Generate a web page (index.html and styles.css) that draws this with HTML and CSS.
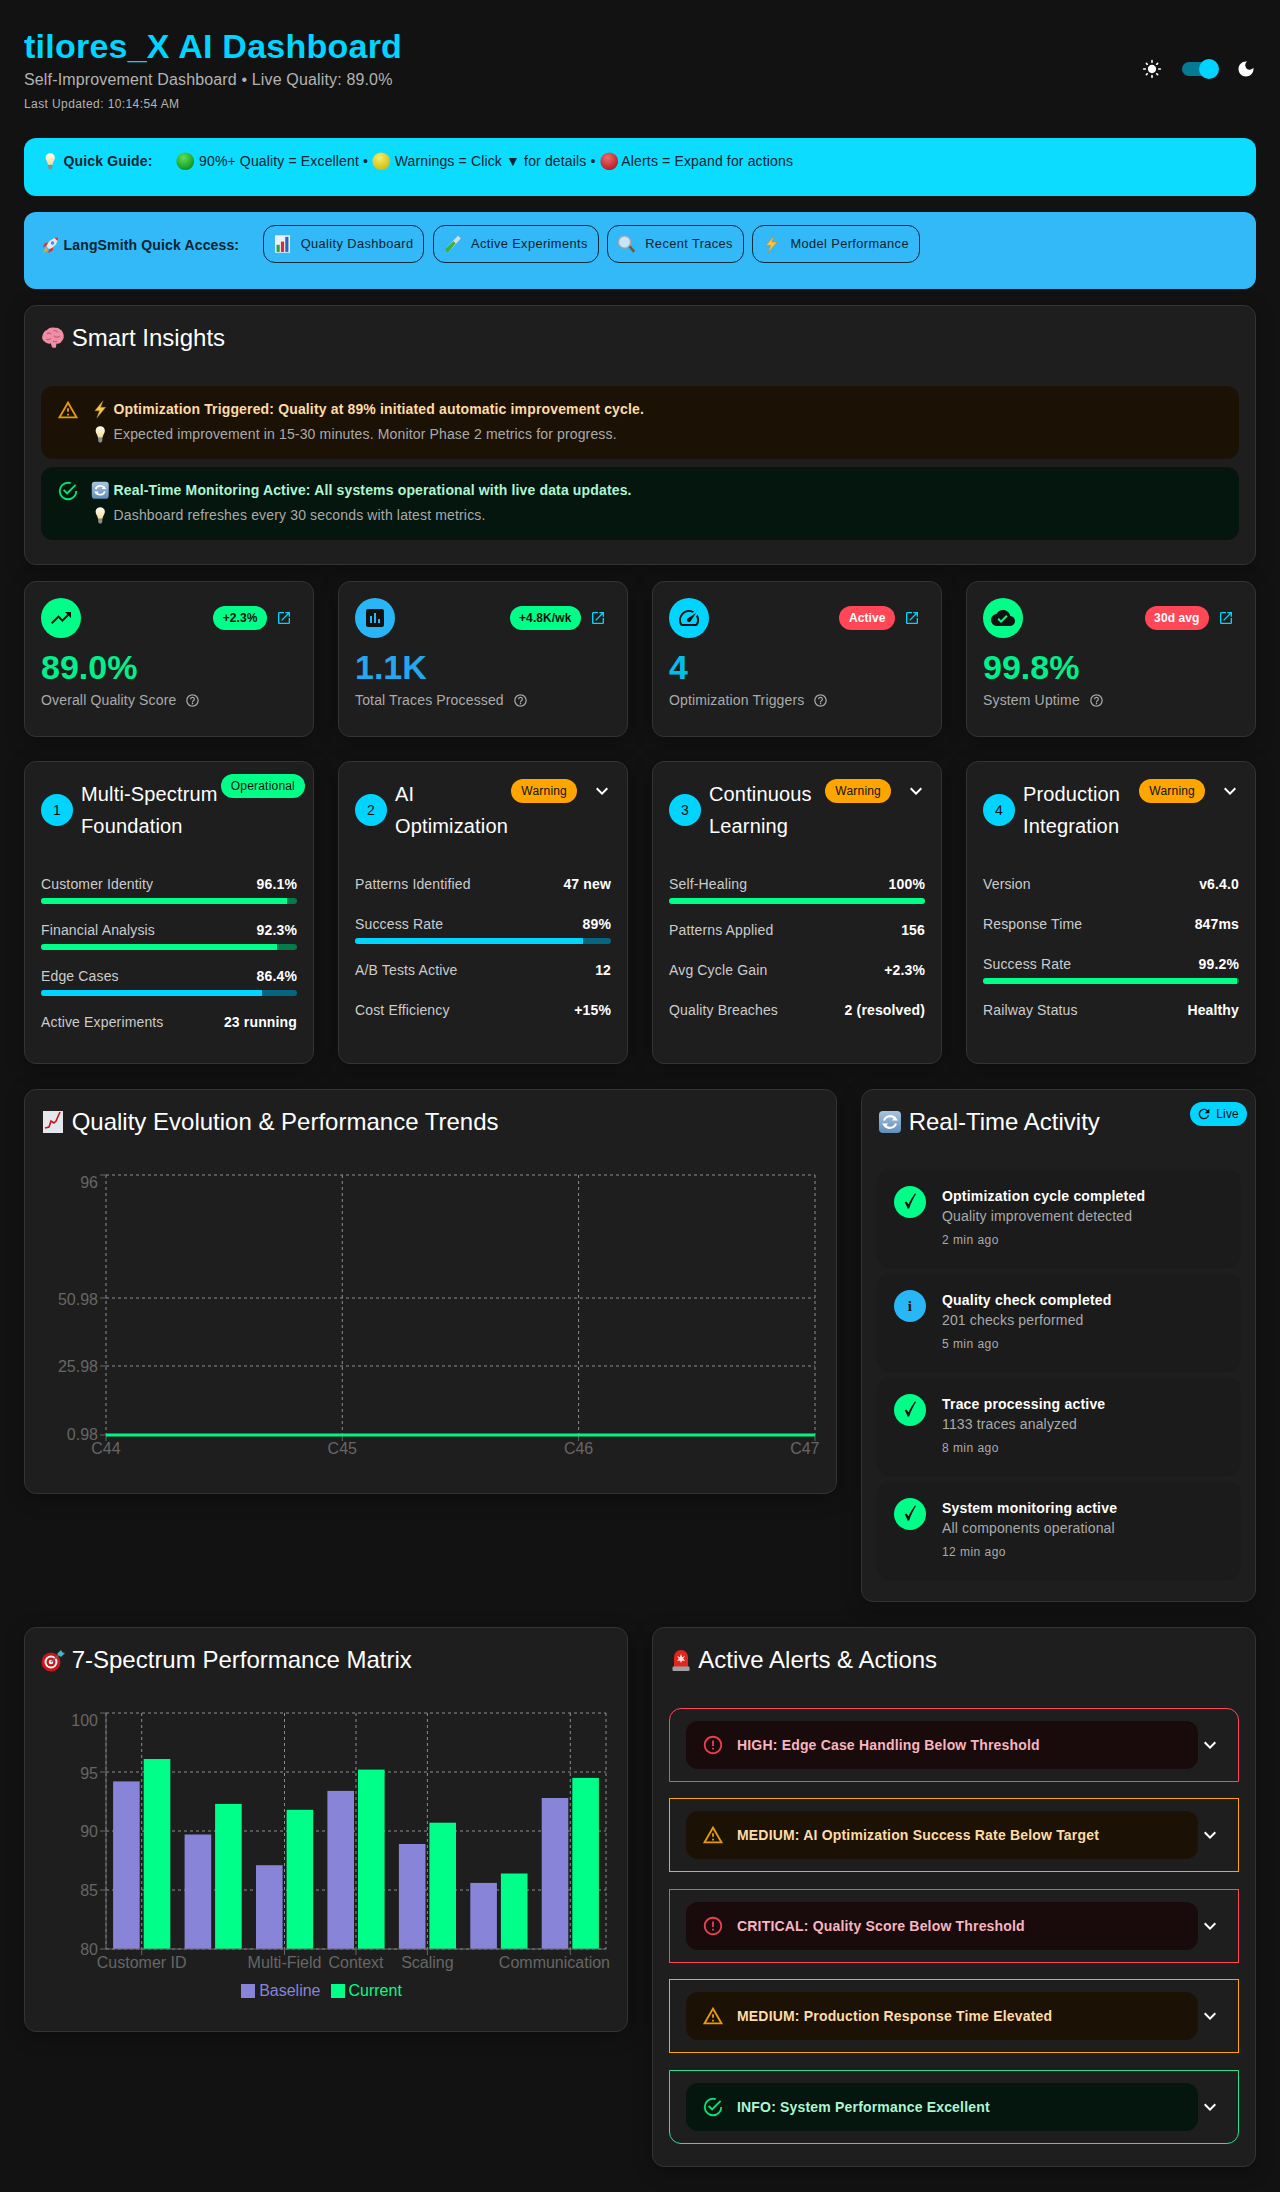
FILE: index.html
```html
<!DOCTYPE html>
<html lang="en">
<head>
    <meta charset="UTF-8">
    <meta name="viewport" content="width=device-width, initial-scale=1.0">
    <title>tilores_X AI Dashboard</title>
    <link rel="stylesheet" href="styles.css">
</head>
<body>
<svg class="sprite" aria-hidden="true">
    <defs>
        <radialGradient id="gGreen" cx="40%" cy="30%" r="75%"><stop offset="0" stop-color="#5fe05a"/><stop offset="1" stop-color="#0a8f1c"/></radialGradient>
        <radialGradient id="gYellow" cx="40%" cy="30%" r="75%"><stop offset="0" stop-color="#f7ee6a"/><stop offset="1" stop-color="#cdb90c"/></radialGradient>
        <radialGradient id="gRed" cx="40%" cy="30%" r="75%"><stop offset="0" stop-color="#ee6a6a"/><stop offset="1" stop-color="#b01a22"/></radialGradient>
        <linearGradient id="gBulb" x1="0" y1="0" x2="0" y2="1"><stop offset="0" stop-color="#fffef0"/><stop offset="1" stop-color="#f3dc9a"/></linearGradient>
        <linearGradient id="gRefresh" x1="0" y1="0" x2="0" y2="1"><stop offset="0" stop-color="#a9c4de"/><stop offset="1" stop-color="#5f8fbb"/></linearGradient>
    </defs>
    <symbol id="e-bulb" viewBox="0 0 24 24">
        <path d="M12 1.500c-3.600 0-6 2.700-6 6 0 3.300 2.600 5 3.100 9h5.800c.5-4 3.100-5.700 3.100-9 0-3.300-2.400-6-6-6z" fill="url(#gBulb)"/>
        <path d="M9.300 17h5.400v3.600l-1.500 2h-2.400l-1.500-2z" fill="#8d8d8a"/>
    </symbol>
    <symbol id="e-green" viewBox="0 0 24 24"><circle cx="12" cy="12" r="11.500" fill="url(#gGreen)"/></symbol>
    <symbol id="e-yellow" viewBox="0 0 24 24"><circle cx="12" cy="12" r="11.500" fill="url(#gYellow)"/></symbol>
    <symbol id="e-red" viewBox="0 0 24 24"><circle cx="12" cy="12" r="11.500" fill="url(#gRed)"/></symbol>
    <symbol id="e-rocket" viewBox="0 0 24 24">
        <path d="M7 13l-5 2 3-6 5-1zM11 17l-2 5 6-3 1-5z" fill="#d8392b"/>
        <path d="M7 13.500C9 7 14.500 2.500 22.500 1.500 21.500 9.500 17 15 10.500 17z" fill="#e6e8ee"/>
        <path d="M22.500 1.500c-.2 1.800-.6 3.400-1.200 4.900l-3.700-3.700c1.500-.6 3.100-1 4.900-1.200z" fill="#d8392b"/>
        <circle cx="15" cy="9" r="2.200" fill="#3f8fd8"/>
        <path d="M6 14.500l3.500 3.500-6.500 4z" fill="#f5a623"/>
    </symbol>
    <symbol id="e-bars" viewBox="0 0 24 24">
        <rect x="2.500" y="1" width="19" height="22" fill="#eef1f4"/>
        <rect x="4.500" y="13" width="4" height="9" fill="#2f9e44"/>
        <rect x="10" y="9" width="4" height="13" fill="#d0312d"/>
        <rect x="15.500" y="3" width="4" height="19" fill="#2b63c4"/>
    </symbol>
    <symbol id="e-tube" viewBox="0 0 24 24">
        <path d="M19 1.500l3.500 3.500L7.500 21.500a2.500 2.500 0 0 1-4-4z" fill="#d6dde0"/>
        <path d="M13 8.500l3 2.500-8.500 10.500a2.500 2.500 0 0 1-4-4z" fill="#3fae49"/>
    </symbol>
    <symbol id="e-lens" viewBox="0 0 24 24">
        <path d="M14 15l2-2 7 7.500-2.500 2.500z" fill="#6d5a3c"/>
        <circle cx="9.500" cy="9.500" r="8.500" fill="#a8a9ad"/>
        <circle cx="9.500" cy="9.500" r="6.800" fill="#c9e6f7"/>
    </symbol>
    <symbol id="e-bolt" viewBox="0 0 24 24">
        <path d="M15.500 1L5 14h6l-3.500 9.500L19 9.500h-6.500z" fill="#f3c64a" stroke="#b3812a" stroke-width=".6"/>
    </symbol>
    <symbol id="e-brain" viewBox="0 0 24 24">
        <path d="M6 4c2-2.500 5-3 7.500-2.200C17 1.500 21 3.500 22 7c1.500 3 .8 6.500-1.500 8.500-1 2-3.500 2.500-5 2-.5 2.500-.5 3.800-.5 4-1.500.5-3 .5-4-.5-.5-1-.8-2-1-3.500-2.500.5-5-.3-6.500-2C1 14 .8 11.500 1.500 9.500 2 7 3.800 4.800 6 4z" fill="#ee8fa6"/>
        <path d="M6 8c1.500-1.500 3-1 4 0M12 5c2-1 4 0 5 1.500M5 13c2 1 4 .5 5-1M13 10c1.500 1.500 4 1.500 6 0M12 15c1 1 3 1 4 0" fill="none" stroke="#c95f7c" stroke-width="1.200"/>
    </symbol>
    <symbol id="e-refresh" viewBox="0 0 24 24">
        <rect x="1" y="1" width="22" height="22" rx="4" fill="url(#gRefresh)"/>
        <path d="M6 10.500A6.500 6.500 0 0 1 17.500 9M18 13.500A6.500 6.500 0 0 1 6.500 15" fill="none" stroke="#fff" stroke-width="2.200"/>
        <path d="M20 10.500h-6l3-4zM4 13.500h6l-3 4z" fill="#fff"/>
    </symbol>
    <symbol id="e-trend" viewBox="0 0 24 24">
        <rect x="2" y="1" width="20" height="22" fill="#e4e8ec"/>
        <path d="M4 18l4-1 2-6 3 2 2-2 4-9" fill="none" stroke="#c9161c" stroke-width="1.600"/>
    </symbol>
    <symbol id="e-target" viewBox="0 0 24 24">
        <circle cx="10" cy="14" r="9.500" fill="#c8161c"/>
        <circle cx="10" cy="14" r="6.500" fill="#f2f2f2"/>
        <circle cx="10" cy="14" r="4.500" fill="#c8161c"/>
        <circle cx="10" cy="14" r="2.300" fill="#f2f2f2"/>
        <path d="M10 14l9-8" stroke="#5a6a70" stroke-width="1.400"/>
        <path d="M16 6l4-4 1.500 2.500L24 5l-4 4z" fill="#45b8c8"/>
    </symbol>
    <symbol id="e-siren" viewBox="0 0 24 24">
        <path d="M5 9a7 7 0 0 1 14 0v10H5z" fill="#e0261f"/>
        <rect x="3.500" y="18.500" width="17" height="4.500" rx="1" fill="#9da1a6"/>
        <path d="M12 6l1.200 3.200L16 8l-1.800 2.800L16 13l-3-.5L12 15l-1-2.500-3 .5 1.800-2.200L8 8l2.800 1.200z" fill="#ffe6e0"/>
    </symbol>

    <symbol id="i-trend" viewBox="0 0 24 24"><path d="M16 6l2.290 2.290-4.880 4.880-4-4L2 16.590 3.410 18l6-6 4 4 6.300-6.290L22 12V6z"/></symbol>
    <symbol id="i-assess" viewBox="0 0 24 24"><path d="M19 3H5c-1.100 0-2 .9-2 2v14c0 1.100.9 2 2 2h14c1.100 0 2-.9 2-2V5c0-1.100-.9-2-2-2zM9 17H7v-7h2v7zm4 0h-2V7h2v10zm4 0h-2v-4h2v4z"/></symbol>
    <symbol id="i-speed" viewBox="0 0 24 24"><path d="M20.380 8.570l-1.230 1.850a8 8 0 0 1-.22 7.580H5.070A8 8 0 0 1 15.580 6.850l1.850-1.230A10 10 0 0 0 3.350 19a2 2 0 0 0 1.720 1h13.850a2 2 0 0 0 1.740-1 10 10 0 0 0-.27-10.440zm-9.790 6.840a2 2 0 0 0 2.830 0l5.660-8.490-8.490 5.660a2 2 0 0 0 0 2.830z"/></symbol>
    <symbol id="i-cloud" viewBox="0 0 24 24"><path d="M19.350 10.040C18.670 6.590 15.640 4 12 4 9.110 4 6.600 5.640 5.350 8.040 2.340 8.360 0 10.910 0 14c0 3.310 2.690 6 6 6h13c2.760 0 5-2.240 5-5 0-2.640-2.050-4.780-4.650-4.960zM10 17l-3.500-3.500 1.410-1.410L10 14.170 15.180 9l1.410 1.410L10 17z"/></symbol>
    <symbol id="i-launch" viewBox="0 0 24 24"><path d="M19 19H5V5h7V3H5c-1.110 0-2 .9-2 2v14c0 1.100.89 2 2 2h14c1.100 0 2-.9 2-2v-7h-2v7zM14 3v2h3.590l-9.830 9.830 1.410 1.410L19 6.410V10h2V3h-7z"/></symbol>
    <symbol id="i-help" viewBox="0 0 24 24"><path d="M11 18h2v-2h-2v2zm1-16C6.480 2 2 6.480 2 12s4.480 10 10 10 10-4.480 10-10S17.520 2 12 2zm0 18c-4.410 0-8-3.590-8-8s3.590-8 8-8 8 3.590 8 8-3.590 8-8 8zm0-14c-2.210 0-4 1.790-4 4h2c0-1.100.9-2 2-2s2 .9 2 2c0 2-3 1.750-3 5h2c0-2.250 3-2.500 3-5 0-2.210-1.790-4-4-4z"/></symbol>
    <symbol id="i-more" viewBox="0 0 24 24"><path d="M16.590 8.590L12 13.170 7.410 8.590 6 10l6 6 6-6z"/></symbol>
    <symbol id="i-refresh" viewBox="0 0 24 24"><path d="M17.650 6.350C16.200 4.900 14.210 4 12 4c-4.420 0-7.990 3.580-7.990 8s3.570 8 7.990 8c3.730 0 6.840-2.550 7.730-6h-2.080c-.82 2.330-3.040 4-5.650 4-3.310 0-6-2.690-6-6s2.690-6 6-6c1.660 0 3.140.69 4.220 1.780L13 11h7V4l-2.350 2.350z"/></symbol>
    <symbol id="i-warn" viewBox="0 0 24 24"><path d="M12 5.990L19.530 19H4.470L12 5.990M12 2L1 21h22L12 2zm1 14h-2v2h2v-2zm0-6h-2v4h2v-4z"/></symbol>
    <symbol id="i-ok" viewBox="0 0 24 24"><path d="M20,12A8,8 0 0,1 12,20A8,8 0 0,1 4,12A8,8 0 0,1 12,4C12.760,4 13.500,4.110 14.200,4.310L15.770,2.740C14.610,2.260 13.340,2 12,2A10,10 0 0,0 2,12A10,10 0 0,0 12,22A10,10 0 0,0 22,12M7.910,10.080L6.500,11.500L11,16L21,6L19.590,4.580L11,13.170L7.910,10.080Z"/></symbol>
    <symbol id="i-error" viewBox="0 0 24 24"><path d="M11 15h2v2h-2zm0-8h2v6h-2zm.99-5C6.470 2 2 6.480 2 12s4.470 10 9.990 10C17.520 22 22 17.520 22 12S17.520 2 11.990 2zM12 20c-4.420 0-8-3.580-8-8s3.580-8 8-8 8 3.580 8 8-3.580 8-8 8z"/></symbol>
    <symbol id="i-sun" viewBox="0 0 24 24"><path d="M12 7c-2.760 0-5 2.240-5 5s2.240 5 5 5 5-2.240 5-5-2.240-5-5-5zM2 13h2c.55 0 1-.45 1-1s-.45-1-1-1H2c-.55 0-1 .45-1 1s.45 1 1 1zm18 0h2c.55 0 1-.45 1-1s-.45-1-1-1h-2c-.55 0-1 .45-1 1s.45 1 1 1zM11 2v2c0 .55.45 1 1 1s1-.45 1-1V2c0-.55-.45-1-1-1s-1 .45-1 1zm0 18v2c0 .55.45 1 1 1s1-.45 1-1v-2c0-.55-.45-1-1-1s-1 .45-1 1zM5.990 4.580c-.39-.39-1.030-.39-1.410 0-.39.39-.39 1.030 0 1.410l1.060 1.060c.39.39 1.030.39 1.410 0s.39-1.030 0-1.410L5.990 4.580zm12.370 12.370c-.39-.39-1.030-.39-1.410 0-.39.39-.39 1.030 0 1.410l1.060 1.060c.39.39 1.030.39 1.410 0 .39-.39.39-1.030 0-1.410l-1.060-1.060zm1.060-10.960c.39-.39.39-1.030 0-1.410-.39-.39-1.030-.39-1.410 0l-1.060 1.060c-.39.39-.39 1.030 0 1.410s1.030.39 1.410 0l1.060-1.060zM7.050 18.360c.39-.39.39-1.030 0-1.410-.39-.39-1.030-.39-1.410 0l-1.060 1.060c-.39.39-.39 1.030 0 1.410s1.030.39 1.410 0l1.060-1.060z"/></symbol>
    <symbol id="i-moon" viewBox="0 0 24 24"><path d="M12 3c-4.970 0-9 4.030-9 9s4.030 9 9 9 9-4.030 9-9c0-.46-.04-.92-.1-1.360-.98 1.370-2.580 2.260-4.400 2.260-2.980 0-5.400-2.420-5.400-5.400 0-1.810.89-3.420 2.260-4.400-.44-.06-.9-.1-1.360-.1z"/></symbol>
    <symbol id="i-tick" viewBox="0 0 12 16"><path d="M.6 9.600l1.900-1.200 1.900 2.900C6.300 7.200 8.600 3.600 11 .4l1 .6C9.500 5 7 10 5.100 15.600H3.500C3 13.600 1.900 11.300.6 9.600z"/></symbol>
</svg>

<main class="page">
    <header class="top">
        <div>
            <h1 class="title">tilores_X AI Dashboard</h1>
            <p class="subtitle">Self-Improvement Dashboard • Live Quality: 89.0%</p>
            <p class="updated">Last Updated: 10:14:54 AM</p>
        </div>
        <div class="theme">
            <svg class="theme-ico"><use href="#i-sun"/></svg>
            <span class="switch"><span class="thumb"></span></span>
            <svg class="theme-ico"><use href="#i-moon"/></svg>
        </div>
    </header>

    <section class="guide">
        <strong><svg class="emo"><use href="#e-bulb"/></svg> Quick Guide:</strong>
        <span><svg class="emo"><use href="#e-green"/></svg> 90%+ Quality = Excellent • <svg class="emo"><use href="#e-yellow"/></svg> Warnings = Click ▼ for details • <svg class="emo"><use href="#e-red"/></svg> Alerts = Expand for actions</span>
    </section>

    <section class="access">
        <strong class="access-label"><svg class="emo"><use href="#e-rocket"/></svg> LangSmith Quick Access:</strong>
        <a class="btn"><svg class="emo"><use href="#e-bars"/></svg>Quality Dashboard</a>
        <a class="btn"><svg class="emo"><use href="#e-tube"/></svg>Active Experiments</a>
        <a class="btn"><svg class="emo"><use href="#e-lens"/></svg>Recent Traces</a>
        <a class="btn"><svg class="emo"><use href="#e-bolt"/></svg>Model Performance</a>
    </section>

    <section class="card insights">
        <h2 class="card-title"><svg class="emo"><use href="#e-brain"/></svg> Smart Insights</h2>
        <div class="banner warn">
            <svg class="ico"><use href="#i-warn"/></svg>
            <div>
                <p class="banner-head"><svg class="emo"><use href="#e-bolt"/></svg> Optimization Triggered: Quality at 89% initiated automatic improvement cycle.</p>
                <p class="banner-sub"><svg class="emo"><use href="#e-bulb"/></svg> Expected improvement in 15-30 minutes. Monitor Phase 2 metrics for progress.</p>
            </div>
        </div>
        <div class="banner good">
            <svg class="ico"><use href="#i-ok"/></svg>
            <div>
                <p class="banner-head"><svg class="emo"><use href="#e-refresh"/></svg> Real-Time Monitoring Active: All systems operational with live data updates.</p>
                <p class="banner-sub"><svg class="emo"><use href="#e-bulb"/></svg> Dashboard refreshes every 30 seconds with latest metrics.</p>
            </div>
        </div>
    </section>

    <section class="grid-4 stats">
        <div class="card stat">
            <div class="stat-top">
                <span class="stat-icon bg-green"><svg class="ico"><use href="#i-trend"/></svg></span>
                <span class="stat-actions"><span class="chip bg-green strong">+2.3%</span><svg class="launch"><use href="#i-launch"/></svg></span>
            </div>
            <div class="stat-value green">89.0%</div>
            <div class="stat-label">Overall Quality Score <svg class="help"><use href="#i-help"/></svg></div>
        </div>
        <div class="card stat">
            <div class="stat-top">
                <span class="stat-icon bg-blue"><svg class="ico"><use href="#i-assess"/></svg></span>
                <span class="stat-actions"><span class="chip bg-green strong">+4.8K/wk</span><svg class="launch"><use href="#i-launch"/></svg></span>
            </div>
            <div class="stat-value blue">1.1K</div>
            <div class="stat-label">Total Traces Processed <svg class="help"><use href="#i-help"/></svg></div>
        </div>
        <div class="card stat">
            <div class="stat-top">
                <span class="stat-icon bg-cyan"><svg class="ico"><use href="#i-speed"/></svg></span>
                <span class="stat-actions"><span class="chip bg-red strong">Active</span><svg class="launch"><use href="#i-launch"/></svg></span>
            </div>
            <div class="stat-value cyan">4</div>
            <div class="stat-label">Optimization Triggers <svg class="help"><use href="#i-help"/></svg></div>
        </div>
        <div class="card stat">
            <div class="stat-top">
                <span class="stat-icon bg-green"><svg class="ico"><use href="#i-cloud"/></svg></span>
                <span class="stat-actions"><span class="chip bg-red strong">30d avg</span><svg class="launch"><use href="#i-launch"/></svg></span>
            </div>
            <div class="stat-value green">99.8%</div>
            <div class="stat-label">System Uptime <svg class="help"><use href="#i-help"/></svg></div>
        </div>
    </section>

    <section class="grid-4 phases">
        <div class="card phase">
            <div class="phase-head">
                <span class="phase-num">1</span>
                <h3 class="phase-title">Multi-Spectrum Foundation</h3>
                <div class="phase-action"><span class="chip bg-green">Operational</span></div>
            </div>
            <div class="row"><span>Customer Identity</span><b>96.1%</b></div>
            <div class="bar track-green"><div class="fill bg-green" style="width:96.1%"></div></div>
            <div class="row"><span>Financial Analysis</span><b>92.3%</b></div>
            <div class="bar track-green"><div class="fill bg-green" style="width:92.3%"></div></div>
            <div class="row"><span>Edge Cases</span><b>86.4%</b></div>
            <div class="bar track-cyan"><div class="fill bg-cyan" style="width:86.4%"></div></div>
            <div class="row plain"><span>Active Experiments</span><b>23 running</b></div>
        </div>
        <div class="card phase">
            <div class="phase-head">
                <span class="phase-num">2</span>
                <h3 class="phase-title">AI Optimization</h3>
                <div class="phase-action"><span class="chip bg-orange">Warning</span><svg class="ico chevron"><use href="#i-more"/></svg></div>
            </div>
            <div class="row plain"><span>Patterns Identified</span><b>47 new</b></div>
            <div class="row"><span>Success Rate</span><b>89%</b></div>
            <div class="bar track-cyan"><div class="fill bg-cyan" style="width:89%"></div></div>
            <div class="row plain"><span>A/B Tests Active</span><b>12</b></div>
            <div class="row plain"><span>Cost Efficiency</span><b>+15%</b></div>
        </div>
        <div class="card phase">
            <div class="phase-head">
                <span class="phase-num">3</span>
                <h3 class="phase-title">Continuous Learning</h3>
                <div class="phase-action"><span class="chip bg-orange">Warning</span><svg class="ico chevron"><use href="#i-more"/></svg></div>
            </div>
            <div class="row"><span>Self-Healing</span><b>100%</b></div>
            <div class="bar track-green"><div class="fill bg-green" style="width:100%"></div></div>
            <div class="row plain"><span>Patterns Applied</span><b>156</b></div>
            <div class="row plain"><span>Avg Cycle Gain</span><b>+2.3%</b></div>
            <div class="row plain"><span>Quality Breaches</span><b>2 (resolved)</b></div>
        </div>
        <div class="card phase">
            <div class="phase-head">
                <span class="phase-num">4</span>
                <h3 class="phase-title">Production Integration</h3>
                <div class="phase-action"><span class="chip bg-orange">Warning</span><svg class="ico chevron"><use href="#i-more"/></svg></div>
            </div>
            <div class="row plain"><span>Version</span><b>v6.4.0</b></div>
            <div class="row plain"><span>Response Time</span><b>847ms</b></div>
            <div class="row"><span>Success Rate</span><b>99.2%</b></div>
            <div class="bar track-green"><div class="fill bg-green" style="width:99.2%"></div></div>
            <div class="row plain"><span>Railway Status</span><b>Healthy</b></div>
        </div>
    </section>

    <section class="split-wide">
        <div class="card trend-card">
            <h2 class="card-title"><svg class="emo"><use href="#e-trend"/></svg> Quality Evolution &amp; Performance Trends</h2>
            <svg class="chart" width="779" height="320" viewBox="0 0 779 320">
                <g class="grid">
                    <path d="M65 20H774M65 143H774M65 211H774M65 280H774"/>
                    <path d="M65 20V280M301.300 20V280M537.600 20V280M774 20V280"/>
                </g>
                <path class="axis" d="M59 20H65M59 143H65M59 211H65M59 280H65M65 280V286M301.300 280V286M537.600 280V286M774 280V286"/>
                <path class="line" d="M65 280H774"/>
                <g class="tick-y">
                    <text x="57" y="33">96</text>
                    <text x="57" y="149.500">50.98</text>
                    <text x="57" y="216.500">25.98</text>
                    <text x="57" y="285">0.98</text>
                </g>
                <g class="tick-x">
                    <text x="65" y="299">C44</text>
                    <text x="301.300" y="299">C45</text>
                    <text x="537.600" y="299">C46</text>
                    <text class="tick-end" x="778.500" y="299">C47</text>
                </g>
            </svg>
        </div>

        <div class="card activity">
            <div class="activity-head">
                <h2 class="card-title"><svg class="emo"><use href="#e-refresh"/></svg> Real-Time Activity</h2>
                <span class="chip bg-cyan live"><svg class="live-ico"><use href="#i-refresh"/></svg>Live</span>
            </div>
            <div class="event">
                <span class="event-dot bg-green"><svg class="tick"><use href="#i-tick"/></svg></span>
                <div><b>Optimization cycle completed</b><p>Quality improvement detected</p><small>2 min ago</small></div>
            </div>
            <div class="event">
                <span class="event-dot bg-blue info">i</span>
                <div><b>Quality check completed</b><p>201 checks performed</p><small>5 min ago</small></div>
            </div>
            <div class="event">
                <span class="event-dot bg-green"><svg class="tick"><use href="#i-tick"/></svg></span>
                <div><b>Trace processing active</b><p>1133 traces analyzed</p><small>8 min ago</small></div>
            </div>
            <div class="event">
                <span class="event-dot bg-green"><svg class="tick"><use href="#i-tick"/></svg></span>
                <div><b>System monitoring active</b><p>All components operational</p><small>12 min ago</small></div>
            </div>
        </div>
    </section>

    <section class="split-even">
        <div class="card matrix">
            <h2 class="card-title"><svg class="emo"><use href="#e-target"/></svg> 7-Spectrum Performance Matrix</h2>
            <svg class="chart matrix-chart" width="570" height="283" viewBox="0 0 570 283">
                <g class="grid">
                    <path d="M65 18H565M65 77H565M65 136H565M65 195H565M65 254H565"/>
                    <path d="M65 18V254M100.700 18V254M243.500 18V254M315 18V254M386.400 18V254M529.300 18V254M565 18V254"/>
                </g>
                <g class="bars-base">
                    <rect x="72.100" y="86.400" width="26.600" height="167.600"/>
                    <rect x="143.600" y="139.500" width="26.600" height="114.500"/>
                    <rect x="215" y="170.200" width="26.600" height="83.800"/>
                    <rect x="286.400" y="95.900" width="26.600" height="158.100"/>
                    <rect x="357.900" y="149" width="26.600" height="105"/>
                    <rect x="429.300" y="187.900" width="26.600" height="66.100"/>
                    <rect x="500.700" y="103" width="26.600" height="151"/>
                </g>
                <g class="bars-now">
                    <rect x="102.700" y="64" width="26.600" height="190"/>
                    <rect x="174.100" y="108.900" width="26.600" height="145.100"/>
                    <rect x="245.600" y="114.800" width="26.600" height="139.200"/>
                    <rect x="317" y="74.600" width="26.600" height="179.400"/>
                    <rect x="388.400" y="127.700" width="26.600" height="126.300"/>
                    <rect x="459.900" y="178.500" width="26.600" height="75.500"/>
                    <rect x="531.300" y="82.900" width="26.600" height="171.100"/>
                </g>
                <path class="axis" d="M65 18V254H565M59 18H65M59 77H65M59 136H65M59 195H65M59 254H65M100.700 254V260M243.500 254V260M315 254V260M386.400 254V260M529.300 254V260"/>
                <g class="tick-y">
                    <text x="57" y="30.500">100</text>
                    <text x="57" y="83.500">95</text>
                    <text x="57" y="141.500">90</text>
                    <text x="57" y="200.500">85</text>
                    <text x="57" y="259.500">80</text>
                </g>
                <g class="tick-x">
                    <text x="100.700" y="272.500">Customer ID</text>
                    <text x="243.500" y="272.500">Multi-Field</text>
                    <text x="315" y="272.500">Context</text>
                    <text x="386.400" y="272.500">Scaling</text>
                    <text class="tick-end" x="569" y="272.500">Communication</text>
                </g>
            </svg>
            <div class="legend">
                <span class="legend-base"><i></i>Baseline</span>
                <span class="legend-now"><i></i>Current</span>
            </div>
        </div>

        <div class="card alerts">
            <h2 class="card-title"><svg class="emo"><use href="#e-siren"/></svg> Active Alerts &amp; Actions</h2>
            <div class="alert-list">
                <div class="alert line-red">
                    <div class="alert-box red"><svg class="ico"><use href="#i-error"/></svg><b>HIGH: Edge Case Handling Below Threshold</b></div>
                    <svg class="ico"><use href="#i-more"/></svg>
                </div>
                <div class="alert line-orange">
                    <div class="alert-box orange"><svg class="ico"><use href="#i-warn"/></svg><b>MEDIUM: AI Optimization Success Rate Below Target</b></div>
                    <svg class="ico"><use href="#i-more"/></svg>
                </div>
                <div class="alert line-red">
                    <div class="alert-box red"><svg class="ico"><use href="#i-error"/></svg><b>CRITICAL: Quality Score Below Threshold</b></div>
                    <svg class="ico"><use href="#i-more"/></svg>
                </div>
                <div class="alert line-orange">
                    <div class="alert-box orange"><svg class="ico"><use href="#i-warn"/></svg><b>MEDIUM: Production Response Time Elevated</b></div>
                    <svg class="ico"><use href="#i-more"/></svg>
                </div>
                <div class="alert line-green">
                    <div class="alert-box mint"><svg class="ico"><use href="#i-ok"/></svg><b>INFO: System Performance Excellent</b></div>
                    <svg class="ico"><use href="#i-more"/></svg>
                </div>
            </div>
        </div>
    </section>
</main>
</body>
</html>
```

FILE: styles.css
```css
* {
    box-sizing: border-box;
}
body {
    margin: 0;
    min-height: 100vh;
    background-color: #121212;
    color: #fff;
    font-family: "Liberation Sans", Arial, sans-serif;
    font-size: 14px;
    line-height: 20px;
    letter-spacing: .15px;
}
p, h1, h2, h3 {
    margin: 0;
}
.sprite {
    display: block;
    width: 0;
    height: 0;
}
.page {
    padding: 24px;
}
.ico {
    width: 24px;
    height: 24px;
    flex: none;
    fill: currentColor;
}
.emo {
    width: 18.500px;
    height: 18.500px;
    vertical-align: -4px;
}

/* colours */
.bg-green { background-color: #00ff88; color: #111; }
.bg-blue { background-color: #29b6f6; color: #111; }
.bg-cyan { background-color: #00d4ff; color: #111; }
.bg-red { background-color: #ff4757; color: #fff; }
.bg-orange { background-color: #ffa500; color: #111; }
.green { color: #00f08b; }
.blue { color: #26a6ec; }
.cyan { color: #00bfea; }

/* header */
.top {
    display: flex;
    justify-content: space-between;
    align-items: center;
    height: 90px;
    margin-bottom: 24px;
}
.title {
    font-size: 34px;
    line-height: 42px;
    font-weight: 700;
    letter-spacing: .24px;
    color: #00d4ff;
}
.subtitle {
    font-size: 16px;
    line-height: 24px;
    margin-top: 1px;
    color: #b3b3b3;
}
.updated {
    font-size: 12px;
    line-height: 20px;
    margin-top: 2px;
    letter-spacing: .4px;
    color: #b3b3b3;
}
.theme {
    display: flex;
    align-items: center;
    gap: 20px;
}
.theme-ico {
    width: 20px;
    height: 20px;
    fill: #fff;
}
.switch {
    display: block;
    width: 34px;
    height: 14px;
    border-radius: 7px;
    background-color: #067a93;
}
.thumb {
    display: block;
    width: 20px;
    height: 20px;
    margin-top: -3px;
    margin-left: 17px;
    border-radius: 50%;
    background-color: #00d4ff;
}

/* top strips */
.guide {
    display: flex;
    gap: 24px;
    height: 58px;
    padding: 12px 17px;
    margin-bottom: 16px;
    border-radius: 12px;
    background-color: #0cdcff;
    color: #0a2530;
    line-height: 22px;
}
.access {
    display: flex;
    gap: 8.500px;
    height: 77px;
    padding: 13px 17px;
    margin-bottom: 16px;
    border-radius: 12px;
    background-color: #33b8f8;
    color: #0a2530;
}
.access-label {
    align-self: flex-start;
    line-height: 40px;
    margin-right: 15px;
}
.btn {
    display: flex;
    align-items: center;
    gap: 9px;
    height: 38px;
    padding: 0 10px 0 9px;
    border: 1px solid #0b2a3c;
    border-radius: 12px;
    font-size: 12.800px;
    letter-spacing: .4px;
    white-space: nowrap;
}
.btn .emo {
    width: 19px;
    height: 20px;
}

/* cards */
.card {
    background-color: #1e1e1e;
    border: 1px solid #333;
    border-radius: 12px;
    padding: 16px;
    box-shadow: 0 4px 20px rgba(0,0,0,.3);
}
.card-title {
    font-size: 24px;
    line-height: 32px;
    font-weight: 400;
    letter-spacing: 0;
}
.card-title .emo {
    width: 24px;
    height: 24px;
    vertical-align: -4px;
}
.insights {
    margin-bottom: 16px;
    padding-bottom: 24px;
}
.insights .card-title {
    margin-bottom: 32px;
}
.banner {
    display: flex;
    gap: 12px;
    height: 73px;
    padding: 13px 16px;
    border-radius: 12px;
}
.banner + .banner {
    margin-top: 8px;
}
.banner.warn { background-color: #1b1205; }
.banner.warn .ico { color: #e69a05; }
.banner.warn .banner-head { color: #ffdba6; }
.banner.good { background-color: #04160e; }
.banner.good .ico { color: #00e67a; }
.banner.good .banner-head { color: #aef5d2; }
.banner .ico {
    width: 22px;
    height: 22px;
}
.banner-head {
    font-weight: 700;
}
.banner-sub {
    margin-top: 5px;
    color: #aaa;
}

/* stat cards */
.grid-4 {
    display: grid;
    grid-template-columns: repeat(4, 1fr);
    gap: 24px;
    margin-bottom: 24px;
}
.stat {
    height: 156px;
}
.stat-top {
    display: flex;
    justify-content: space-between;
    align-items: center;
    height: 40px;
    margin-bottom: 8px;
}
.stat-icon {
    display: flex;
    align-items: center;
    justify-content: center;
    width: 40px;
    height: 40px;
    border-radius: 50%;
}
.stat-actions {
    display: flex;
    align-items: center;
}
.launch {
    width: 16px;
    height: 16px;
    margin: 0 5px 0 9px;
    fill: #00d4ff;
}
.stat-value {
    font-size: 34px;
    line-height: 42px;
    font-weight: 700;
    letter-spacing: 0;
}
.stat-label {
    display: flex;
    align-items: center;
    gap: 9px;
    margin-top: 2px;
    color: #aaa;
}
.help {
    width: 15px;
    height: 15px;
    fill: #aaa;
}
.chip {
    display: inline-flex;
    align-items: center;
    height: 24px;
    padding: 0 10px;
    border-radius: 12px;
    font-size: 12px;
    letter-spacing: .2px;
    white-space: nowrap;
}
.chip.strong {
    padding: 0 9.500px;
    font-weight: 700;
    letter-spacing: .1px;
}

/* phase cards */
.phases {
    margin-bottom: 25px;
}
.phase {
    height: 303px;
}
.phase-head {
    display: flex;
    align-items: center;
    margin-bottom: 32px;
}
.phase-num {
    display: flex;
    align-items: center;
    justify-content: center;
    width: 32px;
    height: 32px;
    margin-right: 8px;
    flex: none;
    border-radius: 50%;
    background-color: #00d4ff;
    color: #111;
}
.phase-title {
    flex: 1;
    font-size: 20px;
    line-height: 32px;
    font-weight: 400;
}
.phase-action {
    display: flex;
    align-items: center;
    align-self: flex-start;
    height: 34px;
    margin: -4px -8px 0 0;
}
.phase-action .chip:only-child {
    align-self: flex-start;
}
.chevron {
    margin: 0 5px 0 13px;
}
.row {
    display: flex;
    justify-content: space-between;
    margin-bottom: 4px;
    color: #ccc;
}
.row.plain {
    margin-bottom: 20px;
}
.row b {
    color: #fff;
}
.bar {
    height: 6px;
    margin-bottom: 16px;
    border-radius: 3px;
    overflow: hidden;
}
.track-green { background-color: #077b47; }
.track-cyan { background-color: #07667f; }
.fill {
    height: 100%;
}

/* middle row */
.split-wide {
    display: grid;
    grid-template-columns: 813px 395px;
    gap: 24px;
    align-items: start;
    margin-bottom: 25px;
}
.trend-card {
    height: 405px;
}
.chart {
    display: block;
    margin-top: 17px;
}
.grid path {
    fill: none;
    stroke: #8e8e8e;
    stroke-dasharray: 3 3;
}
.axis {
    fill: none;
    stroke: #666;
}
.line {
    fill: none;
    stroke: #00f585;
    stroke-width: 3;
}
.chart text {
    letter-spacing: 0;
}
.tick-y text {
    fill: #666;
    font-size: 16px;
    text-anchor: end;
}
.tick-x text {
    fill: #666;
    font-size: 16px;
    text-anchor: middle;
}
.tick-x .tick-end {
    text-anchor: end;
}
.activity {
    height: 513px;
}
.activity-head {
    display: flex;
    justify-content: space-between;
    align-items: flex-start;
    margin-bottom: 32px;
}
.live {
    gap: 4px;
    padding: 0 8px 0 6px;
    margin: -4px -8px 0 0;
}
.live-ico {
    width: 16px;
    height: 16px;
    fill: #111;
}
.event {
    display: flex;
    gap: 16px;
    height: 96px;
    padding: 16px;
    margin-bottom: 8px;
    border-radius: 12px;
    background-color: #1b1b1b;
    box-shadow: 0 1px 3px rgba(0,0,0,.25);
}
.event b {
    display: block;
    letter-spacing: .2px;
}
.event p {
    color: #aaa;
}
.event small {
    display: block;
    margin-top: 5px;
    font-size: 12px;
    line-height: 19px;
    letter-spacing: .45px;
    color: #aaa;
}
.event-dot {
    display: flex;
    align-items: center;
    justify-content: center;
    width: 32px;
    height: 32px;
    flex: none;
    border-radius: 50%;
}
.event-dot.info {
    font-family: "Liberation Serif", serif;
    font-size: 15px;
    font-weight: 700;
}
.tick {
    width: 12px;
    height: 16px;
    margin-bottom: 3px;
    fill: #111;
}

/* bottom row */
.split-even {
    display: grid;
    grid-template-columns: repeat(2, 1fr);
    gap: 24px;
    align-items: start;
}
.matrix {
    height: 405px;
}
.matrix-chart {
    margin-top: 19px;
}
.bars-base rect { fill: #8884d8; }
.bars-now rect { fill: #00ff88; }
.legend {
    display: flex;
    justify-content: center;
    gap: 10px;
    padding-right: 9px;
    margin-top: 1px;
    font-size: 16px;
    line-height: 24px;
    letter-spacing: 0;
}
.legend span {
    display: flex;
    align-items: center;
    gap: 4px;
}
.legend i {
    width: 14px;
    height: 14px;
}
.legend-base { color: #8884d8; }
.legend-base i { background-color: #8884d8; }
.legend-now { color: #00ff88; }
.legend-now i { background-color: #00ff88; }
.alerts {
    height: 540px;
}
.alert-list {
    display: flex;
    flex-direction: column;
    gap: 16.400px;
    margin-top: 32px;
}
.alert {
    display: flex;
    align-items: center;
    height: 74px;
    padding: 0 16px;
    border: 1px solid;
}
.alert:first-child {
    border-radius: 12px 12px 0 0;
}
.alert:last-child {
    border-radius: 0 0 12px 12px;
}
.line-red { border-color: #ff4757; }
.line-orange { border-color: #ffa500; }
.line-green { border-color: #2fe08e; }
.alert-box {
    display: flex;
    flex: 1;
    align-items: center;
    gap: 13px;
    height: 48px;
    padding: 0 16px;
    border-radius: 12px;
    letter-spacing: .18px;
}
.alert-box .ico {
    width: 22px;
    height: 22px;
}
.alert-box.red { background-color: #190a0c; color: #f7b6bf; }
.alert-box.red .ico { color: #ee3e50; }
.alert-box.orange { background-color: #1b1205; color: #ffdba6; }
.alert-box.orange .ico { color: #e69a05; }
.alert-box.mint { background-color: #04160e; color: #aef5d2; }
.alert-box.mint .ico { color: #00e67a; }
```
